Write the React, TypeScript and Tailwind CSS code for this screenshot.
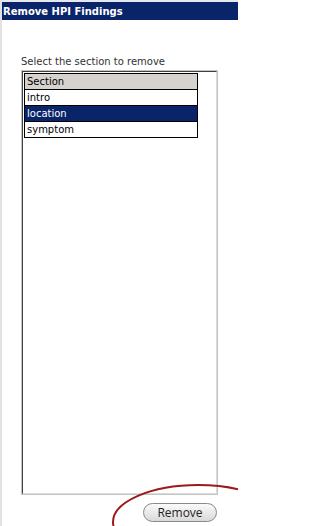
import React from 'react';

const ROWS = ['intro', 'location', 'symptom'];
const SELECTED = 'location';

const font = { fontFamily: 'Tahoma, "DejaVu Sans", Verdana, sans-serif' };

export default function App(): JSX.Element {
  return (
    <div className="relative h-[526px] w-[238px] overflow-hidden border-l-2 border-[#e2e2e2] bg-white" style={font}>
      <div className="h-[2px] bg-[#e6e8ef]" />
      <div className="flex h-[18px] items-center bg-[#0a246a] pl-[1px] text-[10px] font-bold text-white">
        Remove HPI Findings
      </div>

      <div className="mt-[35px] pl-[19px] text-[10px] leading-[14px] text-[#333]">Select the section to remove</div>

      <div className="ml-[19px] mt-[1px] h-[425px] w-[197px] border border-[#c4c4c4]">
        <div className="h-full w-full border border-l-[#404040] border-t-[#404040] border-r-[#dcdcdc] border-b-[#dcdcdc] pl-[1px] pt-[1px]">
          <div className="w-[174px] border border-black text-[10px] leading-[15px] text-black">
            <div className="border-b border-black bg-[#d6d3ce] pl-[2px]">Section</div>
            {ROWS.map((r) => (
              <div
                key={r}
                className={`border-b border-black pl-[2px] last:border-b-0 ${r === SELECTED ? 'bg-[#0a246a] text-white' : 'bg-white'}`}
              >
                {r}
              </div>
            ))}
          </div>
        </div>
      </div>

      <div className="mt-[8px] flex justify-end pr-[21px]">
        <button
          className="h-[19px] w-[74px] rounded-full border border-[#8a8a8a] bg-gradient-to-b from-[#fbfbfb] to-[#d9d9d9] text-[12px] leading-none text-[#222]"
          style={{ fontFamily: '"Segoe UI", "Open Sans", "DejaVu Sans", sans-serif' }}
        >
          Remove
        </button>
      </div>

      {/* red annotation ring over the button */}
      <svg className="pointer-events-none absolute left-0 top-0" width="238" height="526" viewBox="0 0 238 526">
        <ellipse cx="196" cy="522" rx="85" ry="37" fill="none" stroke="#9c1a1a" strokeWidth="2" />
      </svg>
    </div>
  );
}
